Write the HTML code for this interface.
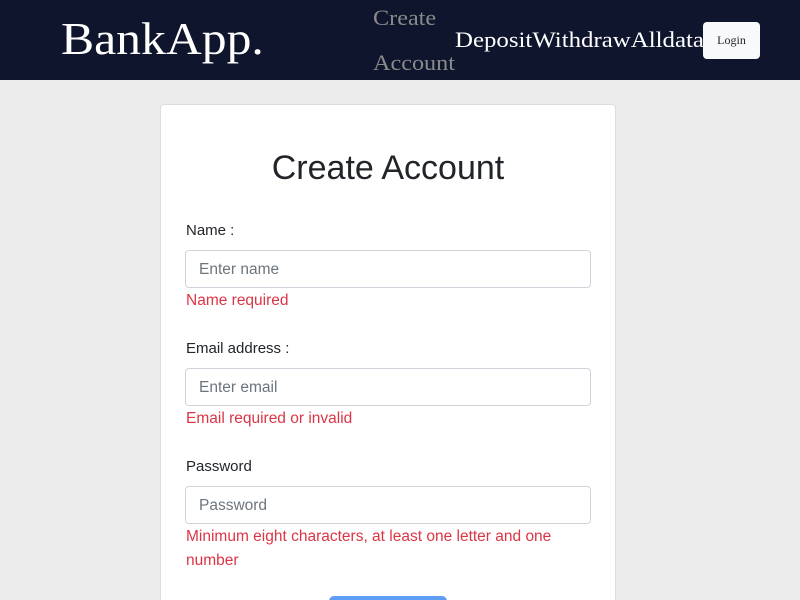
<!DOCTYPE html>
<html style="overflow:hidden;height:600px"><head><style>
body{margin:0;width:800px;height:600px;overflow:hidden;background:#ececec;font-family:"Liberation Sans",sans-serif;position:relative}
.nav{position:absolute;top:0;left:0;width:800px;height:80px;background:#0f152c;font-family:"Liberation Serif",serif}
.logo{position:absolute;left:61px;top:12px;font-size:46px;color:#fff;transform:scaleX(1.08);transform-origin:left}
.ca{position:absolute;left:373px;top:-5px;font-size:22px;color:#8a8a8a;line-height:45px;transform:scaleX(1.1);transform-origin:left}
.links{position:absolute;left:455px;top:27px;font-size:22px;color:#fff;white-space:nowrap;transform:scaleX(1.13);transform-origin:left}
.login{position:absolute;left:703px;top:22px;width:57px;height:37px;background:#f8f9fa;border-radius:4px;font-size:12px;color:#222;text-align:center;line-height:37px;font-family:"Liberation Serif",serif}
.card{position:absolute;left:160px;top:104px;width:454px;height:495px;background:#fff;border:1px solid #ddd;border-bottom:none;border-radius:4px 4px 0 0;overflow:hidden}
h1{position:absolute;left:0;width:454px;text-align:center;top:44px;margin:0;font-size:34px;font-weight:normal;color:#212529}
.lbl{position:absolute;left:25px;font-size:15px;color:#212529}
.in{position:absolute;left:24px;height:36px;border:1px solid #ced4da;border-radius:4px;font-size:15.5px;color:#6c757d;line-height:38px;padding-left:13px;width:391px}
.err{position:absolute;left:25px;font-size:15.5px;color:#dc3545;line-height:24px}
.btn{position:absolute;left:168px;top:491px;width:118px;height:40px;background:#5e9ff5;border-radius:5px}
</style></head><body>
<div class="nav"><div class="logo">BankApp.</div><div class="ca">Create<br>Account</div><div class="links">DepositWithdrawAlldata</div><div class="login">Login</div></div>
<div class="card">
<h1>Create Account</h1>
<div class="lbl" style="top:117px">Name :</div>
<div class="in" style="top:145px">Enter name</div>
<div class="err" style="top:184px">Name required</div>
<div class="lbl" style="top:235px">Email address :</div>
<div class="in" style="top:263px">Enter email</div>
<div class="err" style="top:302px">Email required or invalid</div>
<div class="lbl" style="top:353px">Password</div>
<div class="in" style="top:381px">Password</div>
<div class="err" style="top:420px">Minimum eight characters, at least one letter and one<br>number</div>
<div class="btn"></div>
</div>
</body></html>
